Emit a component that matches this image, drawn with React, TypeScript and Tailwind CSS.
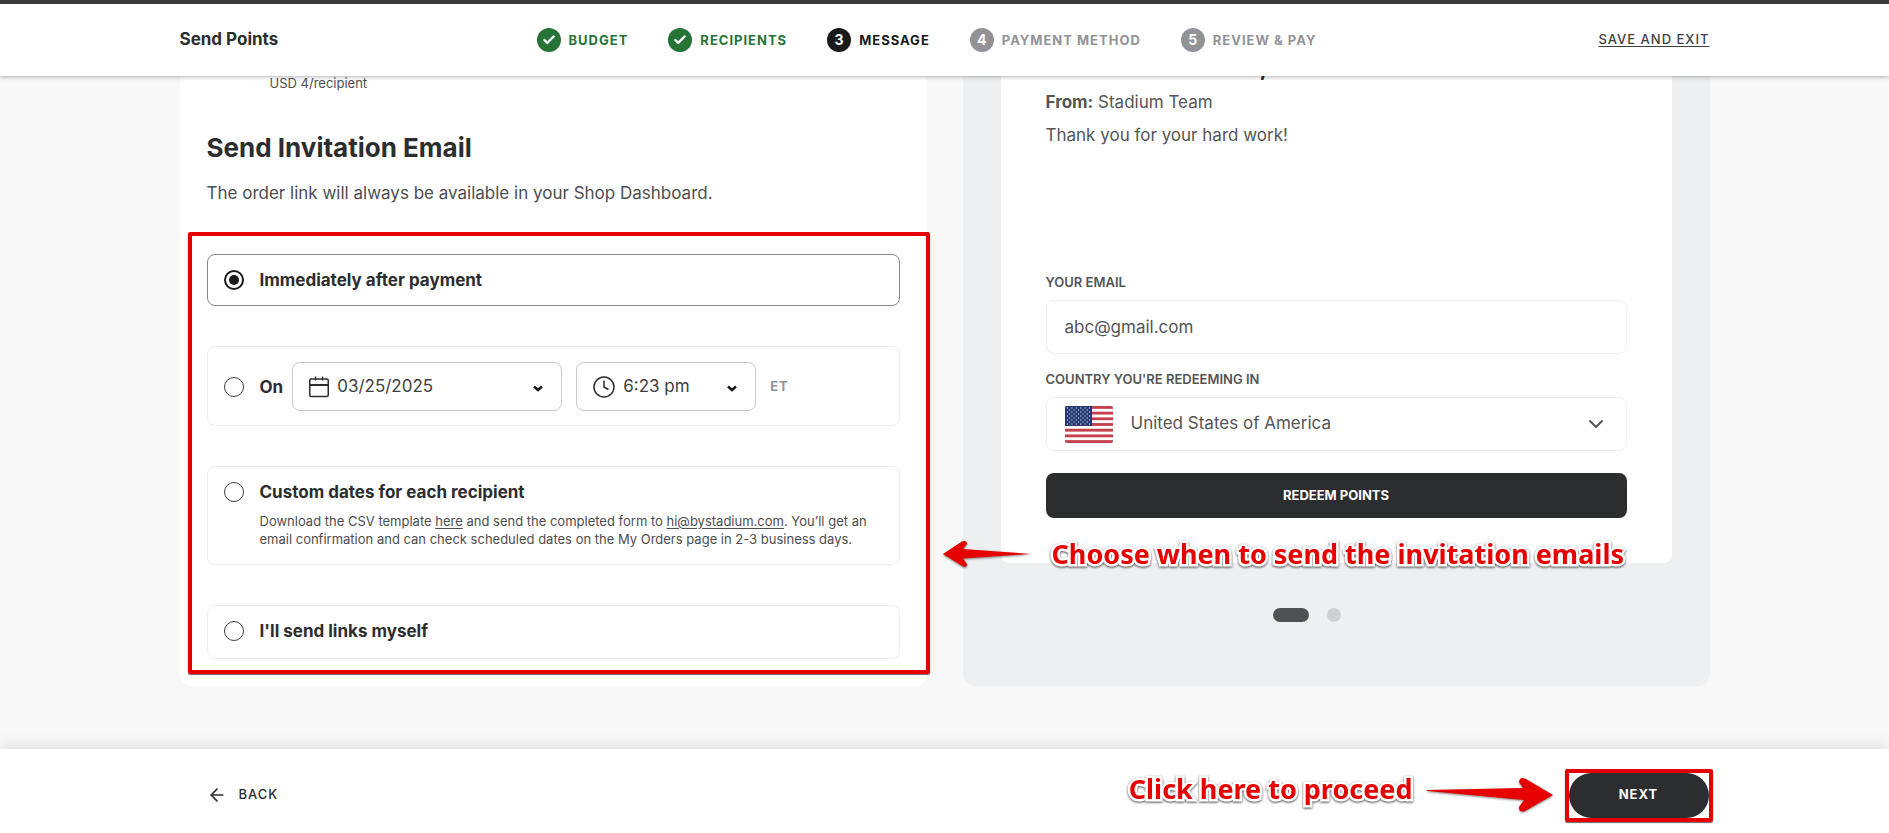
import { useState } from "react";
import type { ReactNode } from "react";
import clsx from "clsx";
import { ArrowLeft, Check, ChevronDown } from "lucide-react";

type StepState = "done" | "current" | "upcoming";

interface Step {
  label: string;
  state: StepState;
}

const STEPS: Step[] = [
  { label: "Budget", state: "done" },
  { label: "Recipients", state: "done" },
  { label: "Message", state: "current" },
  { label: "Payment method", state: "upcoming" },
  { label: "Review & pay", state: "upcoming" },
];

function StepItem({ step, index }: { step: Step; index: number }) {
  return (
    <li
      aria-current={step.state === "current" ? "step" : undefined}
      className={clsx(
        "flex items-center gap-2 text-[13px] leading-6 font-bold uppercase tracking-[1px] whitespace-nowrap",
        step.state === "done" && "text-[#267336]",
        step.state === "current" && "text-[#18191a]",
        step.state === "upcoming" && "text-[#929396]",
      )}
    >
      <span
        className={clsx(
          "flex size-6 items-center justify-center rounded-full text-sm tracking-normal text-white",
          step.state === "done" && "bg-[#267336]",
          step.state === "current" && "bg-[#18191a]",
          step.state === "upcoming" && "bg-[#929396]",
        )}
      >
        {step.state === "done" ? <Check size={14} strokeWidth={4} /> : index + 1}
      </span>
      {step.label}
    </li>
  );
}

function Header() {
  return (
    <header className="relative z-10 border-t-4 border-[#3b3b3c] bg-white shadow-[0_1px_4px_rgba(0,0,0,0.3)]">
      <div className="mx-auto flex h-[72px] max-w-[1530px] items-center">
        <h1 className="w-[357px] text-[17px] font-bold text-[#2c2d2e]">Send Points</h1>
        <ol className="flex gap-10">
          {STEPS.map((step, i) => (
            <StepItem key={step.label} step={step} index={i} />
          ))}
        </ol>
        <a
          href="#exit"
          className="ml-auto text-[13px] font-medium tracking-[1px] text-[#3f4041] uppercase underline underline-offset-2"
        >
          Save and exit
        </a>
      </div>
    </header>
  );
}

interface OptionProps {
  id: string;
  label: string;
  checked: boolean;
  onSelect: (id: string) => void;
  className?: string;
  inline?: ReactNode;
  children?: ReactNode;
}

function Option({ id, label, checked, onSelect, className, inline, children }: OptionProps) {
  return (
    <div
      className={clsx(
        "rounded-lg border px-4",
        checked ? "border-[#88898a]" : "border-[#eeeff0]",
        className,
      )}
    >
      <div className="flex items-center">
        <span className="flex w-9 shrink-0">
          <input
            type="radio"
            id={id}
            name="delivery"
            checked={checked}
            onChange={() => onSelect(id)}
            className="size-5 appearance-none rounded-full border border-[#3f4041] bg-clip-content p-1 checked:border-2 checked:border-[#18191a] checked:bg-[#18191a] checked:p-[3px]"
          />
        </span>
        <label htmlFor={id} className="text-[17px] leading-6 font-bold text-[#2c2d2e]">
          {label}
        </label>
        {inline}
      </div>
      {children}
    </div>
  );
}

function CalendarIcon() {
  return (
    <svg width="20" height="22" viewBox="0 0 20 22" fill="none" stroke="#2c2d2e" strokeWidth="1.5" aria-hidden>
      <rect x="0.75" y="3" width="18.5" height="17.5" rx="1.5" />
      <path d="M1 9h18" strokeWidth="2" />
      <path d="M6.5 0.5v4M13.5 0.5v4" />
    </svg>
  );
}

function ClockIcon() {
  return (
    <svg width="22" height="22" viewBox="0 0 22 22" fill="none" stroke="#2c2d2e" strokeWidth="1.5" aria-hidden>
      <circle cx="11" cy="11" r="10" />
      <path d="M11 4.5V11l4.5 2.5" />
    </svg>
  );
}

interface PickerProps {
  label: string;
  value: string;
  icon: ReactNode;
  className: string;
}

function Picker({ label, value, icon, className }: PickerProps) {
  return (
    <span className={clsx("flex h-[49px] items-center gap-2 rounded-lg border border-[#c9cacc] px-4", className)}>
      {icon}
      <select
        aria-label={label}
        className="min-w-0 flex-1 appearance-none bg-transparent text-[17px] text-[#3f4041] outline-none"
      >
        <option>{value}</option>
      </select>
      <svg width="14" height="10" viewBox="0 0 14 10" fill="none" aria-hidden>
        <path d="M3 4.5l4 3.5 4-3.5" stroke="#18191a" strokeWidth="2.5" />
      </svg>
    </span>
  );
}

function DeliveryOptions() {
  const [selected, setSelected] = useState("immediately");
  return (
    <fieldset aria-label="When to send" className="relative mt-[49px] flex flex-col gap-10">
      <Option
        id="immediately"
        label="Immediately after payment"
        checked={selected === "immediately"}
        onSelect={setSelected}
        className="py-[13px]"
      />
      <Option
        id="scheduled"
        label="On"
        checked={selected === "scheduled"}
        onSelect={setSelected}
        className="pt-[15px] pb-[14px]"
        inline={
          <span className="ml-[9px] flex items-center gap-[14px]">
            <Picker label="Date" value="03/25/2025" icon={<CalendarIcon />} className="w-[270px]" />
            <Picker label="Time" value="6:23 pm" icon={<ClockIcon />} className="w-[180px]" />
            <span className="text-[13px] font-bold tracking-[1px] text-[#929396]">ET</span>
          </span>
        }
      />
      <Option
        id="custom"
        label="Custom dates for each recipient"
        checked={selected === "custom"}
        onSelect={setSelected}
        className="pt-[13px] pb-4"
      >
        <p className="mt-2 pl-9 text-[13px] leading-[18px] text-[#4d4e50]">
          Download the CSV template{" "}
          <a href="#template" className="underline underline-offset-2">here</a> and send the completed form to{" "}
          <a href="mailto:hi@bystadium.com" className="underline underline-offset-2">hi@bystadium.com</a>. You’ll get an
          email confirmation and can check scheduled dates on the My Orders page in 2-3 business days.
        </p>
      </Option>
      <Option
        id="myself"
        label="I'll send links myself"
        checked={selected === "myself"}
        onSelect={setSelected}
        className="pt-[13px] pb-[15px]"
      />
      {/* highlight frame around all the options */}
      <span
        aria-hidden
        className="pointer-events-none absolute -top-[22px] -right-[30px] -bottom-[15px] -left-[19px] rounded-[2px] border-4 border-[#e60000] shadow-[0_1px_1px_rgba(0,0,0,0.6)]"
      />
    </fieldset>
  );
}

function Note({ children }: { children: ReactNode }) {
  return (
    <span className="font-['Noto_Sans',sans-serif] text-[27px] leading-8 font-bold whitespace-nowrap text-[#e60000] [-webkit-text-stroke:5px_white] [filter:drop-shadow(0_1px_1px_rgba(0,0,0,0.7))] [paint-order:stroke_fill]">
      {children}
    </span>
  );
}

function UsFlag() {
  const stars = Array.from({ length: 9 }, (_, row) =>
    Array.from({ length: row % 2 ? 5 : 6 }, (_, col) => ({
      x: 2.5 + col * 4.4 + (row % 2 ? 2.2 : 0),
      y: 2 + row * 2,
    })),
  ).flat();
  return (
    <svg width="48" height="37" viewBox="0 0 48 37" className="overflow-hidden rounded-[2px]" aria-hidden>
      <rect width="48" height="37" fill="#fff" />
      {[0, 1, 2, 3, 4, 5, 6].map((i) => (
        <rect key={i} y={i * 5.69} width="48" height="2.85" fill="#c5404b" />
      ))}
      <rect width="27" height="19.9" fill="#22386f" />
      {stars.map((s) => (
        <circle key={`${s.x}-${s.y}`} cx={s.x} cy={s.y} r="0.65" fill="#d5dbe8" />
      ))}
    </svg>
  );
}

function Preview() {
  return (
    <section aria-label="Email preview" className="relative rounded-b-xl bg-[#eeeff1] px-[38px] text-[#545556]">
      <div className="rounded-b-lg bg-white px-[45px] pb-[45px]">
        <div aria-hidden className="flex h-1 items-end overflow-hidden pl-[214px] text-2xl leading-none font-bold text-[#2c2d2e]">
          ,
        </div>
        <p className="mt-[10px] text-[17px] leading-6">
          <b>From:</b> Stadium Team
        </p>
        <p className="mt-[9px] text-[17px] leading-6">Thank you for your hard work!</p>
        <label htmlFor="email" className="mt-[127px] block text-[13px] leading-4 font-semibold uppercase">
          Your email
        </label>
        <input
          id="email"
          type="email"
          defaultValue="abc@gmail.com"
          className="mt-[10px] h-[54px] w-full rounded-lg border border-[#eeeff0] px-[18px] text-[17px] outline-none"
        />
        <label htmlFor="country" className="mt-[17px] block text-[13px] leading-4 font-semibold uppercase">
          Country you're redeeming in
        </label>
        <div className="mt-[10px] flex h-[54px] items-center rounded-lg border border-[#eeeff0] px-[18px]">
          <UsFlag />
          <select id="country" className="ml-[18px] min-w-0 flex-1 appearance-none bg-transparent text-[17px] outline-none">
            <option>United States of America</option>
          </select>
          <ChevronDown size={24} strokeWidth={2} />
        </div>
        <button
          type="button"
          className="mt-[22px] h-[45px] w-full rounded-lg bg-[#2c2d2e] text-[13px] font-bold text-white uppercase"
        >
          Redeem points
        </button>
      </div>

      <div className="mt-[45px] flex items-center justify-center gap-[18px] pr-[58px]">
        <button type="button" aria-label="Slide 1" className="h-[14px] w-9 rounded-full bg-[#4f5152]" />
        <button type="button" aria-label="Slide 2" className="size-[14px] rounded-full bg-[#cfd0d1]" />
      </div>

      <div className="pointer-events-none absolute bottom-[116px] -left-5 flex items-center gap-[21px]">
        <svg width="88" height="28" viewBox="0 0 88 28" className="drop-shadow-[0_1px_1px_rgba(0,0,0,0.5)]" aria-hidden>
          <path d="M0 14L19 1.5Q24 0 24 4L20 9 88 14 20 18.5 24 24Q24 28 20 26.500Z" fill="#e60000" />
        </svg>
        <Note>Choose when to send the invitation emails</Note>
      </div>
    </section>
  );
}

function Footer() {
  return (
    <footer className="relative bg-white shadow-[0_-2px_16px_rgba(0,0,0,0.12)]">
      <div className="mx-auto flex h-[84px] max-w-[1530px] items-center justify-between pt-2 pr-px pl-[27px]">
        <button
          type="button"
          className="flex items-center gap-3 text-[13px] font-medium tracking-[1px] text-[#2c2d2e] uppercase"
        >
          <ArrowLeft size={20} />
          Back
        </button>
        <div className="flex items-center gap-4">
          <div className="pointer-events-none flex items-center gap-[14px]">
            <span className="flex pb-3">
              <Note>Click here to proceed</Note>
            </span>
            <svg width="126" height="36" viewBox="0 0 126 36" className="drop-shadow-[0_1px_1px_rgba(0,0,0,0.5)]" aria-hidden>
              <path d="M0 13L96 11 92 5Q93-1 99 2L126 18 98 34Q92 36 92 30L97 23 0 14Z" fill="#e60000" />
            </svg>
          </div>
          <div className="relative">
            <button
              type="button"
              className="h-[45px] w-[140px] rounded-full bg-[#2c2d2e] text-[13px] font-bold tracking-[1px] text-white uppercase"
            >
              Next
            </button>
            <span
              aria-hidden
              className="pointer-events-none absolute -inset-1 rounded-[2px] border-4 border-[#e60000] shadow-[0_1px_1px_rgba(0,0,0,0.6)]"
            />
          </div>
        </div>
      </div>
    </footer>
  );
}

export default function App() {
  return (
    <div className="flex min-h-screen flex-col bg-[#f8f8f8] font-[Inter,sans-serif]">
      <Header />
      <main className="mx-auto grid w-full max-w-[1530px] flex-1 grid-cols-2 gap-9 pb-[63px]">
        <section className="rounded-b-xl bg-white px-[27px] pb-[26px]">
          <p className="pl-[63px] text-[13px] leading-[14px] text-[#4d4e50]">USD 4/recipient</p>
          <h2 className="mt-[42px] text-[26px] leading-8 font-bold text-[#2c2d2e]">Send Invitation Email</h2>
          <p className="mt-[17px] text-[17px] leading-6 text-[#4d4e50]">
            The order link will always be available in your Shop Dashboard.
          </p>
          <DeliveryOptions />
        </section>
        <Preview />
      </main>
      <Footer />
    </div>
  );
}
